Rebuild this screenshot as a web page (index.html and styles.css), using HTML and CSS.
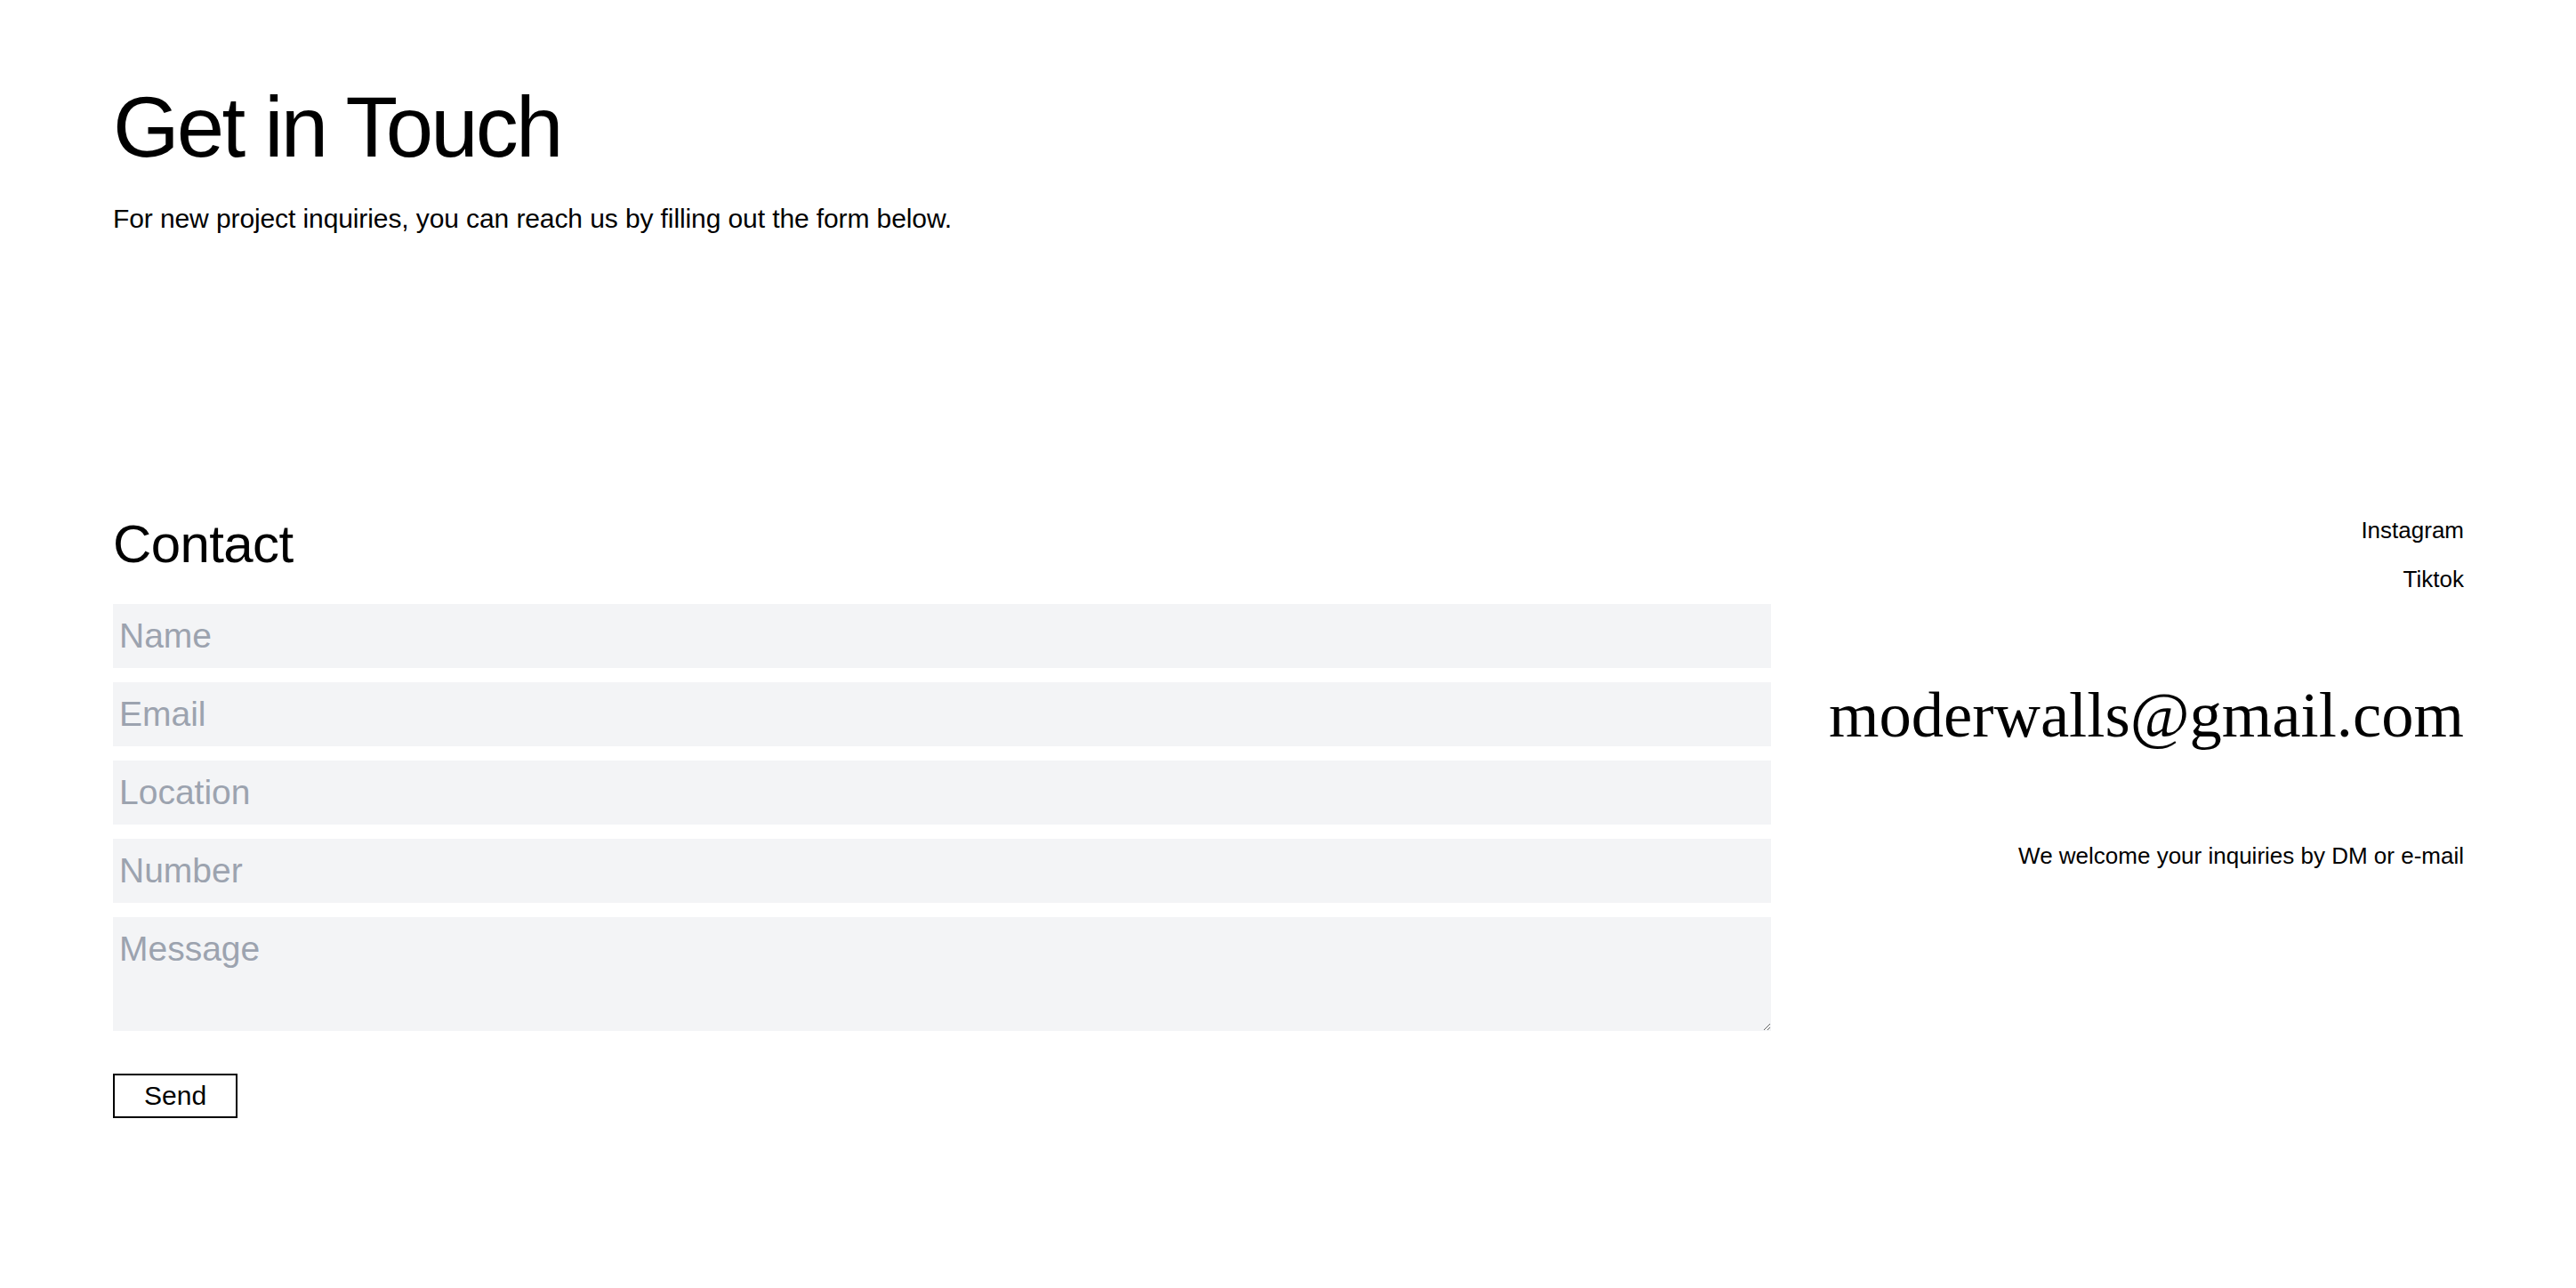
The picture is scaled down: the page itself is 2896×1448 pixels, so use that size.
FILE: index.html
```html
<!DOCTYPE html>
<html lang="en">
<head>
<meta charset="utf-8">
<title>Get in Touch</title>
<link rel="stylesheet" href="styles.css">
</head>
<body>
<main class="page">
  <header class="intro">
    <h1 class="title">Get in Touch</h1>
    <p class="lead">For new project inquiries, you can reach us by filling out the form below.</p>
  </header>
  <section class="contact">
    <form class="form">
      <h2 class="form-title">Contact</h2>
      <div class="fields">
        <input class="field" type="text" placeholder="Name">
        <input class="field" type="email" placeholder="Email">
        <input class="field" type="text" placeholder="Location">
        <input class="field" type="text" placeholder="Number">
        <textarea class="field field-message" placeholder="Message"></textarea>
      </div>
      <button class="send" type="button">Send</button>
    </form>
    <aside class="info">
      <nav class="social">
        <a class="social-link" href="#">Instagram</a>
        <a class="social-link" href="#">Tiktok</a>
      </nav>
      <p class="email">moderwalls@gmail.com</p>
      <p class="note">We welcome your inquiries by DM or e-mail</p>
    </aside>
  </section>
</main>
</body>
</html>
```

FILE: styles.css
```css
* {
  box-sizing: border-box;
}

html, body {
  margin: 0;
  padding: 0;
  background: #ffffff;
}

body {
  font-family: "Liberation Sans", Arial, sans-serif;
  color: #000000;
}

.page {
  padding: 95px 126px 120px 127px;
}

.title {
  margin: 0;
  font-size: 96px;
  line-height: 96px;
  font-weight: 400;
  letter-spacing: -2.8px;
}

.lead {
  margin: 37px 0 0;
  font-size: 30px;
  line-height: 36px;
  letter-spacing: -0.1px;
}

.contact {
  margin-top: 313px;
  display: grid;
  grid-template-columns: 1864px 1fr;
}

.form {
  display: flex;
  flex-direction: column;
  align-items: flex-start;
}

.form-title {
  margin: 5px 0 0;
  font-size: 60px;
  line-height: 60px;
  font-weight: 400;
  letter-spacing: -0.6px;
}

.fields {
  margin-top: 37px;
  width: 100%;
  display: flex;
  flex-direction: column;
  gap: 16px;
}

.field {
  display: block;
  width: 100%;
  height: 72px;
  margin: 0;
  padding: 0 7px;
  border: none;
  outline: none;
  border-radius: 0;
  background: #f3f4f6;
  font-family: "Liberation Sans", Arial, sans-serif;
  font-size: 39px;
  color: #111827;
}

.field::placeholder {
  color: #9ca3af;
  opacity: 1;
}

.field-message {
  height: 128px;
  padding: 14px 7px;
  resize: vertical;
}

.send {
  margin-top: 48px;
  height: 50px;
  padding: 0 33px;
  background: #ffffff;
  border: 2px solid #000000;
  border-radius: 0;
  font-family: "Liberation Sans", Arial, sans-serif;
  font-size: 30px;
  color: #000000;
  cursor: pointer;
}

.info {
  display: flex;
  flex-direction: column;
  align-items: flex-end;
  text-align: right;
}

.social {
  display: flex;
  flex-direction: column;
  align-items: flex-end;
  gap: 16px;
}

.social-link {
  font-size: 26px;
  line-height: 39px;
  color: #000000;
  text-decoration: none;
}

.email {
  margin: 97px 0 0;
  font-family: "Liberation Serif", "Times New Roman", serif;
  font-size: 72.6px;
  line-height: 72px;
  white-space: nowrap;
}

.note {
  margin: 103px 0 0;
  font-size: 26px;
  line-height: 39px;
}
```
